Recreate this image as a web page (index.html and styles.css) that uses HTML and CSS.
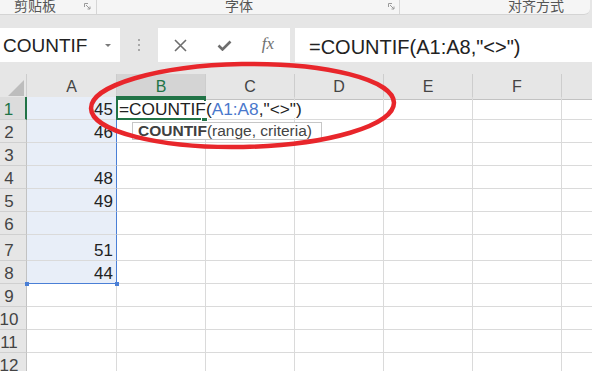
FILE: index.html
```html
<!DOCTYPE html>
<html lang="zh-CN">
<head>
  <meta charset="UTF-8">
  <title>COUNTIF</title>
  <link rel="stylesheet" href="styles.css">
</head>
<body>
  <div class="ribbon">
    <div class="group clip">
      <span class="label">剪贴板</span>
      <svg class="launch" width="7" height="7" viewBox="0 0 7 7"><path d="M0.5 4V0.5H4M2 2l4 4M6 3.5V6H3.5" fill="none" stroke="#9a9a9a" stroke-width="1"/></svg>
    </div>
    <div class="group font">
      <span class="label">字体</span>
      <svg class="launch" width="7" height="7" viewBox="0 0 7 7"><path d="M0.5 4V0.5H4M2 2l4 4M6 3.5V6H3.5" fill="none" stroke="#9a9a9a" stroke-width="1"/></svg>
    </div>
    <div class="group align">
      <span class="label">对齐方式</span>
    </div>
  </div>

  <div class="formula-bar">
    <div class="name-box">
      <span>COUNTIF</span>
      <svg class="drop" width="6" height="4" viewBox="0 0 6 4"><path d="M0 0h6L3 3z" fill="#7a7a7a"/></svg>
    </div>
    <div class="grip"><i></i><i></i><i></i></div>
    <div class="fx-box">
      <span class="fx-btn">
        <svg width="13" height="13" viewBox="0 0 13 13"><path d="M1 1l11 11M12 1L1 12" stroke="#6e6e6e" stroke-width="1.6"/></svg>
      </span>
      <span class="fx-btn">
        <svg width="15" height="11" viewBox="0 0 15 11"><path d="M1.5 5.5l4 4 8-8" fill="none" stroke="#6e6e6e" stroke-width="2.6"/></svg>
      </span>
      <span class="fx-btn fx">fx</span>
    </div>
    <div class="formula">=COUNTIF(A1:A8,"&lt;&gt;")</div>
  </div>

  <div class="sheet">
    <div class="row head">
      <div class="corner"><svg width="16" height="16" viewBox="0 0 16 16"><path d="M16 0V16H0z" fill="#bdbdbd"/></svg></div>
      <div class="col">A</div>
      <div class="col on">B</div>
      <div class="col">C</div>
      <div class="col">D</div>
      <div class="col">E</div>
      <div class="col">F</div>
      <div class="col"></div>
    </div>
    <div class="row">
      <div class="num on">1</div>
      <div class="cell sel">45</div>
      <div class="cell active"><span class="edit">=COUNTIF(<span class="ref">A1:A8</span>,"&lt;&gt;")</span></div>
      <div class="cell"></div><div class="cell"></div><div class="cell"></div><div class="cell"></div><div class="cell"></div>
    </div>
    <div class="row">
      <div class="num">2</div>
      <div class="cell sel">46</div>
      <div class="cell"></div><div class="cell"></div><div class="cell"></div><div class="cell"></div><div class="cell"></div><div class="cell"></div>
    </div>
    <div class="row">
      <div class="num">3</div>
      <div class="cell sel"></div>
      <div class="cell"></div><div class="cell"></div><div class="cell"></div><div class="cell"></div><div class="cell"></div><div class="cell"></div>
    </div>
    <div class="row">
      <div class="num">4</div>
      <div class="cell sel">48</div>
      <div class="cell"></div><div class="cell"></div><div class="cell"></div><div class="cell"></div><div class="cell"></div><div class="cell"></div>
    </div>
    <div class="row">
      <div class="num">5</div>
      <div class="cell sel">49</div>
      <div class="cell"></div><div class="cell"></div><div class="cell"></div><div class="cell"></div><div class="cell"></div><div class="cell"></div>
    </div>
    <div class="row">
      <div class="num">6</div>
      <div class="cell sel"></div>
      <div class="cell"></div><div class="cell"></div><div class="cell"></div><div class="cell"></div><div class="cell"></div><div class="cell"></div>
    </div>
    <div class="row tall">
      <div class="num">7</div>
      <div class="cell sel">51</div>
      <div class="cell"></div><div class="cell"></div><div class="cell"></div><div class="cell"></div><div class="cell"></div><div class="cell"></div>
    </div>
    <div class="row">
      <div class="num">8</div>
      <div class="cell sel last">44</div>
      <div class="cell"></div><div class="cell"></div><div class="cell"></div><div class="cell"></div><div class="cell"></div><div class="cell"></div>
    </div>
    <div class="row">
      <div class="num">9</div>
      <div class="cell"></div><div class="cell"></div><div class="cell"></div><div class="cell"></div><div class="cell"></div><div class="cell"></div><div class="cell"></div>
    </div>
    <div class="row">
      <div class="num">10</div>
      <div class="cell"></div><div class="cell"></div><div class="cell"></div><div class="cell"></div><div class="cell"></div><div class="cell"></div><div class="cell"></div>
    </div>
    <div class="row">
      <div class="num">11</div>
      <div class="cell"></div><div class="cell"></div><div class="cell"></div><div class="cell"></div><div class="cell"></div><div class="cell"></div><div class="cell"></div>
    </div>
    <div class="row">
      <div class="num">12</div>
      <div class="cell"></div><div class="cell"></div><div class="cell"></div><div class="cell"></div><div class="cell"></div><div class="cell"></div><div class="cell"></div>
    </div>

    <!-- function hint under the cell being edited -->
    <div class="hint"><b>COUNTIF</b>(range, criteria)</div>
  </div>

  <!-- red marker drawn over the screenshot -->
  <svg class="mark" width="592" height="371" viewBox="0 0 592 371">
    <ellipse cx="242.5" cy="105.5" rx="151.5" ry="41.5" transform="rotate(-1.1 242.5 105.5)" fill="none" stroke="#e8262b" stroke-width="4.5"/>
  </svg>
</body>
</html>
```

FILE: styles.css
```css
body {
  margin: 0;
  width: 592px;
  height: 371px;
  overflow: hidden;
  position: relative;
  background: #e6e6e6;
  font-family: "Liberation Sans", Arial, sans-serif;
  color: #222;
}

/* ribbon strip, only its bottom edge is visible */
.ribbon {
  display: flex;
  height: 14px;
  margin-right: 2px;
  background: #f5f5f5;
  border-bottom: 1px solid #d4d4d4;
  border-bottom-right-radius: 6px;
  overflow: hidden;
  font-family: "Noto Sans CJK SC", sans-serif;
  font-size: 14px;
  color: #555;
}
.ribbon .group {
  display: flex;
  align-items: flex-start;
  border-right: 1px solid #d6d6d6;
  box-sizing: border-box;
}
.ribbon .label {
  line-height: 14px;
  margin-top: -2px;
}
.ribbon .launch {
  margin: 3px 0 0 auto;
}
.group.clip {
  width: 97px;
  padding-left: 14px;
}
.group.clip .launch { margin-right: 5px; }
.group.font {
  width: 303px;
  padding-left: 128px;
}
.group.font .launch { margin-right: 4px; }
.group.align {
  flex: 1;
  padding-left: 108px;
  border-right: none;
}

/* name box + formula bar */
.formula-bar {
  display: flex;
  height: 59px;
  box-sizing: border-box;
  padding: 13px 0 12px;
}
.name-box {
  width: 120px;
  background: #fff;
  display: flex;
  align-items: center;
  box-sizing: border-box;
  padding: 1px 0 0 3px;
  font-size: 19px;
  line-height: 33px;
}
.name-box .drop {
  margin-left: auto;
  margin-right: 9px;
}
.grip {
  width: 38px;
  display: flex;
  flex-direction: column;
  align-items: center;
  justify-content: center;
  gap: 3px;
}
.grip i {
  display: block;
  width: 2px;
  height: 2px;
  background: #a8a8a8;
}
.fx-box {
  width: 132px;
  background: #fff;
  display: flex;
}
.fx-btn {
  width: 44px;
  display: flex;
  align-items: center;
  justify-content: center;
}
.fx-btn.fx {
  font-family: "Liberation Serif", serif;
  font-style: italic;
  font-size: 17px;
  color: #707070;
  padding-bottom: 2px;
}
.formula {
  flex: 1;
  margin-left: 5px;
  background: #fff;
  padding: 4px 0 0 14px;
  font-size: 20px;
  line-height: 30px;
}

/* grid */
.sheet {
  position: relative;
  background: #fff;
}
.row {
  display: grid;
  grid-template-columns: 27px 90px repeat(6, 89px);
  height: 23px;
}
.row.tall { height: 26px; }
.row > div {
  box-sizing: border-box;
  border-right: 1px solid #dadada;
  border-bottom: 1px solid #dadada;
}

.head > div {
  background: #e6e6e6;
  border-right-color: #cdcdcd;
  border-bottom-color: #c2c2c2;
}
.corner {
  display: flex;
  align-items: flex-end;
  justify-content: flex-end;
  padding: 0 2px 3px 0;
}
.col {
  text-align: center;
  font-size: 16px;
  line-height: 23px;
  padding-top: 1px;
  color: #444;
}
.head .col.on {
  background: #d4d4d4;
  color: #217346;
  border-bottom: 2px solid #217346;
}

.num {
  background: #e6e6e6;
  border-right-color: #c2c2c2 !important;
  border-bottom-color: #d0d0d0 !important;
  display: flex;
  align-items: flex-end;
  justify-content: center;
  padding: 0 8px 1px 0;
  font-size: 17px;
  line-height: 17px;
  color: #444;
}
.num.on {
  background: #dcdcdc;
  color: #217346;
  border-right: 2px solid #217346 !important;
}

.cell {
  display: flex;
  align-items: flex-end;
  justify-content: flex-end;
  padding: 0 3px 1px 0;
  font-size: 17px;
  line-height: 17px;
  white-space: nowrap;
}
.cell.sel {
  background: #e8eef8;
  border-right: 1px solid #4a7fd6;
}
.cell.sel.last {
  position: relative;
  border-bottom: 1px solid #4a7fd6;
}
.cell.sel.last::before,
.cell.sel.last::after {
  content: "";
  position: absolute;
  bottom: -3px;
  width: 4px;
  height: 4px;
  background: #4a7fd6;
}
.cell.sel.last::before { left: -2px; }
.cell.sel.last::after { right: -3px; }

/* cell being edited */
.cell.active {
  position: relative;
  justify-content: flex-start;
  padding-left: 2px;
  overflow: visible;
  z-index: 2;
}
.cell.active::before {
  content: "";
  position: absolute;
  left: -1px;
  top: -1px;
  right: -1px;
  bottom: -1px;
  border: 2px solid #217346;
}
.cell.active::after {
  content: "";
  position: absolute;
  right: -3px;
  bottom: -3px;
  width: 5px;
  height: 5px;
  background: #217346;
  border: 1px solid #fff;
}
.edit {
  position: relative;
  z-index: 1;
  background: #fff;
  padding-right: 3px;
  font-size: 17.3px;
}
.ref { color: #4a78cc; }

.hint {
  position: absolute;
  left: 132px;
  top: 48px;
  width: 190px;
  height: 18px;
  box-sizing: border-box;
  z-index: 3;
  background: #fff;
  border: 1px solid #c6c6c6;
  padding-left: 5px;
  font-size: 15.5px;
  line-height: 16px;
  color: #444;
  white-space: nowrap;
}
.hint b { color: #404040; }

.mark {
  position: absolute;
  top: 0;
  left: 0;
  pointer-events: none;
  z-index: 10;
}
```
